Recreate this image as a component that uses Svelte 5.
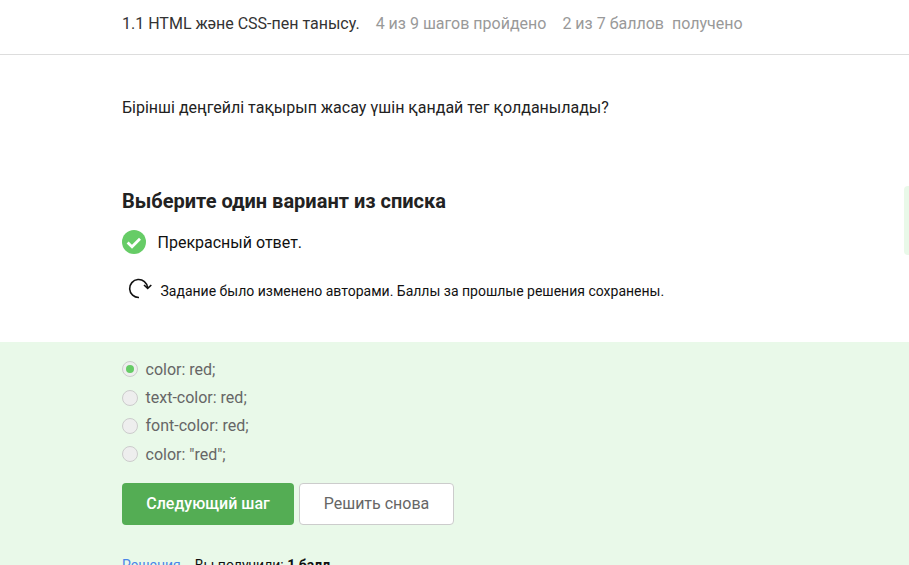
<script>
  const options = [
    { label: 'color: red;', checked: true },
    { label: 'text-color: red;', checked: false },
    { label: 'font-color: red;', checked: false },
    { label: 'color: "red";', checked: false }
  ];
</script>

<div class="page">
  <header class="top">
    <span class="lesson">1.1 HTML және CSS-пен танысу.</span>
    <span class="progress">4 из 9 шагов пройдено</span>
    <span class="progress points">2 из 7 баллов&nbsp; получено</span>
  </header>

  <section class="question">
    <p class="text">Бірінші деңгейлі тақырып жасау үшін қандай тег қолданылады?</p>
    <h2>Выберите один вариант из списка</h2>
    <div class="status">
      <svg width="24" height="24" viewBox="0 0 24 24">
        <circle cx="12" cy="12" r="12" fill="#66cc66" />
        <path d="M5.6 12.6l4.4 4.1 8-8" fill="none" stroke="#fff" stroke-width="2.8" />
      </svg>
      <span>Прекрасный ответ.</span>
    </div>
    <div class="notice">
      <svg width="24" height="24" viewBox="0 0 24 24">
        <path d="M11 18.5A9 9 0 1 1 19.6 8.6" fill="none" stroke="#111" stroke-width="1.6" />
        <path d="M16 6l3.7 3.3L23.3 6" fill="none" stroke="#111" stroke-width="1.6" />
      </svg>
      <span>Задание было изменено авторами. Баллы за прошлые решения сохранены.</span>
    </div>
    <div class="edge"></div>
  </section>

  <section class="answer">
    <ul class="options">
      {#each options as opt}
        <li>
          <span class="radio" class:checked={opt.checked}></span>
          <span>{opt.label}</span>
        </li>
      {/each}
    </ul>
    <div class="actions">
      <button class="btn primary" type="button">Следующий шаг</button>
      <button class="btn secondary" type="button">Решить снова</button>
    </div>
    <div class="result">
      <a href="#solutions">Решения</a>
      <span>Вы получили: <b>1 балл</b></span>
    </div>
  </section>
</div>

<style>
  :global(body) {
    margin: 0;
    background: #fff;
  }

  .page {
    height: 565px;
    overflow: hidden;
    font-family: Roboto, "Liberation Sans", sans-serif;
    color: #222;
  }

  .top {
    box-sizing: border-box;
    height: 55px;
    padding: 14px 0 0 122px;
    border-bottom: 1px solid #ddd;
    font-size: 16px;
    line-height: 19px;
    white-space: nowrap;
  }

  .lesson {
    color: #333;
  }

  .progress {
    margin-left: 12px;
    color: #999;
  }

  .points {
    margin-left: 12px;
  }

  .question {
    position: relative;
    box-sizing: border-box;
    height: 287px;
    padding: 43px 0 0 122px;
  }

  .text {
    margin: 0;
    font-size: 16px;
    line-height: 19px;
    color: #222;
  }

  h2 {
    margin: 72px 0 0;
    font-size: 20px;
    line-height: 24px;
    font-weight: 700;
    color: #222;
  }

  .status {
    display: flex;
    align-items: center;
    gap: 11.5px;
    margin-top: 17px;
    font-size: 16px;
    color: #111;
  }

  .notice {
    display: flex;
    align-items: center;
    gap: 8.5px;
    margin: 25px 0 0 6px;
    font-size: 14px;
    color: #111;
  }

  .notice svg {
    overflow: visible;
  }

  .edge {
    position: absolute;
    top: 131px;
    right: 0;
    width: 5px;
    height: 69px;
    border-radius: 4px 0 0 4px;
    background: #e9f9e9;
  }

  .answer {
    box-sizing: border-box;
    height: 223px;
    padding: 13px 0 0 122px;
    background: #e9f9e9;
  }

  .options {
    margin: 0;
    padding: 0;
    list-style: none;
    font-size: 16px;
    color: #666;
  }

  .options li {
    display: flex;
    align-items: center;
    gap: 7.5px;
    height: 28.4px;
  }

  .radio {
    box-sizing: border-box;
    display: flex;
    align-items: center;
    justify-content: center;
    width: 16px;
    height: 16px;
    border: 1px solid #ccc;
    border-radius: 50%;
    background: #eee;
  }

  .radio.checked::after {
    content: '';
    width: 8px;
    height: 8px;
    border-radius: 50%;
    background: #66cc66;
  }

  .actions {
    display: flex;
    gap: 5px;
    margin-top: 14px;
  }

  .btn {
    box-sizing: border-box;
    height: 42px;
    border-radius: 4px;
    font-family: inherit;
    font-size: 16px;
    cursor: pointer;
  }

  .primary {
    width: 172px;
    border: none;
    background: #54ad54;
    color: #fff;
    font-weight: 500;
  }

  .secondary {
    width: 155px;
    border: 1px solid #ccc;
    background: #fff;
    color: #666;
  }

  .result {
    display: flex;
    gap: 14px;
    margin-top: 32px;
    font-size: 14px;
    line-height: 17px;
    color: #111;
  }

  .result a {
    color: #4a86e8;
    text-decoration: none;
  }
</style>
